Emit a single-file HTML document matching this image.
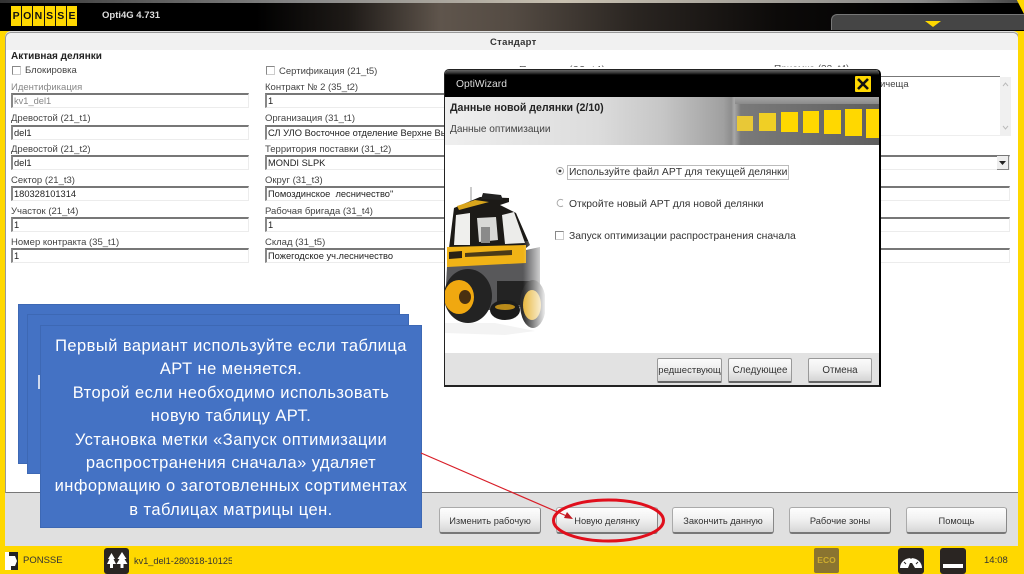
<!DOCTYPE html>
<html><head><meta charset="utf-8">
<style>
html,body{margin:0;padding:0;width:1024px;height:574px;overflow:hidden;background:#ffd800}
body{position:relative;font-family:"Liberation Sans",sans-serif;color:#333;filter:blur(.3px)}
div,span{position:absolute;box-sizing:border-box;white-space:nowrap}
.l{font-size:9.5px;line-height:12px;color:#444}
.f{height:15px;background:#fff;border:1px solid #ececec;border-top:2px solid #777;border-left:2px solid #888;font-size:9.3px;line-height:12px;padding-left:1px;color:#222;overflow:hidden}
.cb{width:9px;height:9px;border:1px solid #888;border-right-color:#ccc;border-bottom-color:#ccc;background:#fff}
.b{height:27px;border-radius:3px;border:1px solid #aaa;border-bottom:2px solid #777;border-right:1px solid #888;background:linear-gradient(#fdfdfd,#f2f2f2 45%,#d6d6d6);font-size:9.3px;line-height:26px;text-align:center;color:#333}
.d{height:25px;border-radius:2px;border:1px solid #999;border-bottom:2px solid #666;background:linear-gradient(#fbfbfb,#eee 50%,#d4d4d4);font-size:9.8px;line-height:23px;text-align:center;color:#333;overflow:hidden}
.s{background:#4472c4;border:1px solid #3d68b4}
.t{font-size:16.5px;line-height:23.4px;letter-spacing:.45px;color:#fff;text-align:center;left:0;right:0}
.dl{font-size:10.35px;color:#333;line-height:13px}
.y{background:#ffd800}
.logo{display:flex;left:11px;top:6px;width:66px;height:20px;background:#111;gap:1px}
.logo b{flex:1;background:#ffd800;color:#111;font:bold 10.5px/21px "Liberation Sans",sans-serif;text-align:center}
</style></head><body>

<!-- top bar -->
<div style="left:0;top:0;width:1024px;height:31px;background:linear-gradient(90deg,#000 0,#000 25%,#1e1a17 34%,#5f554c 43%,#544b43 50%,#2a2521 62%,#0c0a09 76%,#000 90%)"></div>
<div style="left:0;top:0;width:1024px;height:3px;background:linear-gradient(90deg,#333,#888 30%,#c8c0b0 55%,#888 90%,#444)"></div>
<div class="logo"><b>P</b><b>O</b><b>N</b><b>S</b><b>S</b><b>E</b></div>
<div style="left:102px;top:10px;font:bold 9.5px/12px 'Liberation Sans',sans-serif;color:#ddd">Opti4G 4.731</div>
<div style="left:831px;top:14px;width:193px;height:16px;background:#454545;border-radius:6px 0 0 0;border-top:1px solid #777;border-left:1px solid #777"></div>
<svg style="position:absolute;left:0;top:0" width="1024" height="31"><polygon points="925,21 941,21 933,27" fill="#ffd800"/></svg>
<div style="left:1012px;top:0;width:12px;height:14px;background:#ffd800;clip-path:polygon(40% 0,100% 0,100% 100%)"></div>

<!-- main panel -->
<div style="left:5px;top:31px;width:1014px;height:515px;background:#e0e0e0;border-radius:6px 6px 0 0"></div>
<div style="left:5px;top:32px;width:1014px;height:461px;background:#fff;border:1px solid #999;border-radius:6px 6px 0 0;border-bottom:1px solid #777"></div>
<div style="left:6px;top:33px;width:1012px;height:17px;background:#f1f1f1;border-radius:6px 6px 0 0"></div>
<div style="left:490px;top:37px;font:bold 9.5px/12px 'Liberation Sans',sans-serif;color:#333;letter-spacing:.3px">Стандарт</div>
<div style="left:1018px;top:31px;width:2px;height:515px;background:#ffd800"></div>

<div style="left:11px;top:51px;font:bold 10px/12px 'Liberation Sans',sans-serif;color:#222">Активная делянки</div>
<div class="cb" style="left:12px;top:66px"></div><div class="l" style="left:25px;top:65px">Блокировка</div>
<div class="cb" style="left:266px;top:66px"></div><div class="l" style="left:279px;top:66px">Сертификация (21_t5)</div>

<div class="l" style="left:11px;top:82px;color:#888">Идентификация</div><div class="f" style="left:11px;top:93px;width:238px;color:#888">kv1_del1</div>
<div class="l" style="left:11px;top:113px">Древостой (21_t1)</div><div class="f" style="left:11px;top:125px;width:238px">del1</div>
<div class="l" style="left:11px;top:144px">Древостой (21_t2)</div><div class="f" style="left:11px;top:155px;width:238px">del1</div>
<div class="l" style="left:11px;top:175px">Сектор (21_t3)</div><div class="f" style="left:11px;top:186px;width:238px">180328101314</div>
<div class="l" style="left:11px;top:206px">Участок (21_t4)</div><div class="f" style="left:11px;top:217px;width:238px">1</div>
<div class="l" style="left:11px;top:237px">Номер контракта (35_t1)</div><div class="f" style="left:11px;top:248px;width:238px">1</div>

<div class="l" style="left:265px;top:82px">Контракт № 2 (35_t2)</div><div class="f" style="left:265px;top:93px;width:200px">1</div>
<div class="l" style="left:265px;top:113px">Организация (31_t1)</div><div class="f" style="left:265px;top:125px;width:200px">СЛ УЛО Восточное отделение Верхне Вычегодское</div>
<div class="l" style="left:265px;top:144px">Территория поставки (31_t2)</div><div class="f" style="left:265px;top:155px;width:200px">MONDI SLPK</div>
<div class="l" style="left:265px;top:175px">Округ (31_t3)</div><div class="f" style="left:265px;top:186px;width:200px">Помоздинское&nbsp; лесничество"</div>
<div class="l" style="left:265px;top:206px">Рабочая бригада (31_t4)</div><div class="f" style="left:265px;top:217px;width:200px">1</div>
<div class="l" style="left:265px;top:237px">Склад (31_t5)</div><div class="f" style="left:265px;top:248px;width:200px">Пожегодское уч.лесничество</div>

<!-- right column -->
<div style="left:870px;top:76px;width:130px;height:60px;background:#fff;border-top:1px solid #777;border-bottom:1px solid #eee;font-size:9.5px;line-height:12px;padding-left:10px;padding-top:2px;color:#444">ичеща</div>
<div style="left:1000px;top:77px;width:11px;height:59px;background:#f0f0f0"></div>
<svg style="position:absolute;left:1000px;top:77px" width="11" height="59"><path d="M3 9 5.5 6 8 9M3 49 5.5 52 8 49" fill="none" stroke="#bbb"/></svg>
<div class="f" style="left:870px;top:155px;width:140px"></div>
<div style="left:997px;top:156px;width:12px;height:14px;background:#eee;border-right:1px solid #888;border-bottom:1px solid #888"></div>
<svg style="position:absolute;left:998px;top:160px" width="10" height="6"><polygon points="1,1 8,1 4.5,5" fill="#222"/></svg>
<div class="f" style="left:870px;top:186px;width:140px"></div>
<div class="f" style="left:870px;top:217px;width:140px"></div>
<div class="f" style="left:870px;top:248px;width:140px"></div>

<!-- clipped labels: only the tops peek out above the dialog -->
<div style="left:519px;top:60px;width:100px;height:7px;overflow:hidden"><div class="l" style="left:0;top:4px;color:#555;font-size:10.5px;letter-spacing:.5px">Приемка (33_t4)</div></div>
<div style="left:774px;top:60px;width:100px;height:7px;overflow:hidden"><div class="l" style="left:0;top:4px;color:#555;font-size:10px">Приемка (33_t4)</div></div>

<!-- dialog -->
<div style="left:444px;top:69px;width:437px;height:318px;background:#fff;border:1px solid #222;border-right:2px solid #000;border-bottom:2px solid #222;border-radius:5px 5px 0 0;overflow:hidden">
 <div style="left:0;top:0;width:435px;height:28px;background:linear-gradient(#666 0,#333 3px,#000 5px,#000)"></div>
 <div style="left:11px;top:8px;font-size:10.3px;line-height:13px;color:#ddd">OptiWizard</div>
 <div style="left:410px;top:6px;width:16px;height:16px;background:#ffd800;border-radius:1px"></div>
 <svg style="position:absolute;left:410px;top:6px" width="16" height="16"><path d="M3 3 13 13M13 3 3 13" stroke="#111" stroke-width="2.6"/></svg>
 <div style="left:0;top:27px;width:435px;height:48px;background:linear-gradient(90deg,#efefef 0,#dcdcdc 35%,#c6c6c6 50%,#a0a0a0 64%,#8e8e8e 65.800%,#a8a8a8 66.500%,#7a7a7a 68%,#6c6c6c 85%,#5e5e5e)"></div>
 <div style="left:290px;top:27px;width:145px;height:7px;background:linear-gradient(#a5a5a5,#8a8a8a)"></div>
 <div class="y" style="left:292px;top:46px;width:16px;height:15px;background:#e8c837"></div>
 <div class="y" style="left:314px;top:43px;width:17px;height:18px;background:#f0cf25"></div>
 <div class="y" style="left:336px;top:42px;width:17px;height:20px"></div>
 <div class="y" style="left:358px;top:41px;width:16px;height:22px"></div>
 <div class="y" style="left:379px;top:40px;width:17px;height:24px"></div>
 <div class="y" style="left:400px;top:39px;width:17px;height:27px"></div>
 <div class="y" style="left:421px;top:39px;width:14px;height:29px"></div>
 <div style="left:5px;top:32px;font:bold 10.6px/12px 'Liberation Sans',sans-serif;color:#222">Данные новой делянки (2/10)</div>
 <div style="left:5px;top:54px;font-size:10.1px;line-height:12px;color:#444">Данные оптимизации</div>

 <svg style="position:absolute;left:110px;top:96px" width="14" height="14"><circle cx="5" cy="5" r="3.6" fill="#fff" stroke="#aaa"/><circle cx="5" cy="5" r="1.4" fill="#333"/></svg>
 <div class="dl" style="left:122px;top:95px;width:222px;height:15px;border:1px solid #bbb;padding-left:1px">Используйте файл APT для текущей делянки</div>
 <svg style="position:absolute;left:110px;top:128px" width="14" height="14"><path d="M8 2.2A3.6 3.6 0 1 0 8 7.8" fill="none" stroke="#aaa"/></svg>
 <div class="dl" style="left:124px;top:128px">Откройте новый APT для новой делянки</div>
 <div class="cb" style="left:110px;top:161px"></div>
 <div class="dl" style="left:124px;top:160px">Запуск оптимизации распространения сначала</div>

 <!-- machine -->
 <svg style="position:absolute;left:0;top:115px" width="100" height="160">
  <defs><linearGradient id="fade" x1="0" x2="1"><stop offset="0" stop-color="#fff" stop-opacity="0"/><stop offset="1" stop-color="#fff"/></linearGradient></defs>
  <path d="M2 82 95 62 95 118 60 125 10 125 0 118Z" fill="#58585a"/>
  <path d="M26 18V2" stroke="#bbb" stroke-width="1.500"/>
  <path d="M9 23 35 12 64 13 64 17 55 20 71 28 85 60 81 63 4 63Z" fill="#1c1a17"/>
  <path d="M12 21 30 15 44 17 14 25Z" fill="#d9a51c"/>
  <path d="M38 8 56 10 58 15 36 14Z" fill="#222"/>
  <path d="M11 30 25 28 25 60 9 60Z" fill="#efefed"/>
  <path d="M32 33 51 32 53 55 34 57Z" fill="#d8d8d6"/>
  <rect x="36" y="42" width="9" height="16" fill="#8a8a8a"/>
  <path d="M57 30 69 27 80 58 60 59Z" fill="#ececea"/>
  <path d="M2 62 81 60 81 78 2 82Z" fill="#f0b316"/>
  <path d="M4 67 17 66 17 73 4 74Z" fill="#2a2114"/>
  <path d="M20 68 67 65 67 70 20 72Z" fill="#4a3a18"/>
  <rect x="52" y="96" width="34" height="24" fill="#232323"/>
  <ellipse cx="23" cy="111" rx="24" ry="27" fill="#232323"/>
  <ellipse cx="14" cy="112" rx="15" ry="17" fill="#f0a810"/>
  <ellipse cx="20" cy="112" rx="6" ry="7" fill="#4a3010"/>
  <ellipse cx="60" cy="125" rx="15" ry="10" fill="#1c1c1c"/>
  <ellipse cx="60" cy="122" rx="10" ry="3" fill="#b98a1a"/>
  <ellipse cx="88" cy="119" rx="13" ry="24" fill="#2c2c2c"/>
  <ellipse cx="87" cy="120" rx="9" ry="15" fill="#e8b840"/>
  <rect x="78" y="56" width="24" height="100" fill="url(#fade)"/>
  <path d="M0 138 50 138 90 146 60 150 0 148Z" fill="#f3f3f3"/>
 </svg>

 <div style="left:0;top:283px;width:435px;height:33px;background:#e2e2e2"></div>
 <div class="d" style="left:212px;top:288px;width:65px;font-size:9.5px">редшествующ</div>
 <div class="d" style="left:283px;top:288px;width:64px">Следующее</div>
 <div class="d" style="left:363px;top:288px;width:64px">Отмена</div>
</div>

<!-- bottom buttons -->
<div class="b" style="left:439px;top:507px;width:102px">Изменить рабочую</div>
<div class="b" style="left:556px;top:507px;width:102px">Новую делянку</div>
<div class="b" style="left:672px;top:507px;width:102px">Закончить данную</div>
<div class="b" style="left:789px;top:507px;width:102px">Рабочие зоны</div>
<div class="b" style="left:906px;top:507px;width:101px">Помощь</div>

<!-- blue stacked notes -->
<div class="s" style="left:18px;top:304px;width:382px;height:160px"></div>
<div class="s" style="left:27px;top:314px;width:382px;height:160px"></div>
<div style="left:38px;top:375px;width:2px;height:14px;background:#cfd9ee"></div>
<div class="s" style="left:40px;top:325px;width:382px;height:203px">
 <div class="t" style="top:9px">Первый вариант используйте если таблица<br>АРТ не меняется.<br>Второй если необходимо использовать<br>новую таблицу АРТ.<br>Установка метки «Запуск оптимизации<br>распространения сначала» удаляет<br>информацию о заготовленных сортиментах<br>в таблицах матрицы цен.</div>
</div>

<!-- red annotation -->
<svg style="position:absolute;left:0;top:0" width="1024" height="574">
 <line x1="421" y1="453" x2="569" y2="517" stroke="#d81e28" stroke-width="1.2"/>
 <polygon points="573,519 564,518 567,512" fill="#c01820"/>
 <ellipse cx="608.500" cy="520.500" rx="55" ry="20.500" fill="none" stroke="#e00f1c" stroke-width="3"/>
</svg>

<!-- status bar -->
<div style="left:0;top:546px;width:1024px;height:28px;background:#ffd800"></div>
<div style="left:5px;top:552px;width:13px;height:18px;background:#fff"></div>
<svg style="position:absolute;left:5px;top:552px" width="14" height="18"><path d="M4 0 13 0 13 18 6 18 6 14 10 14 12 9 10 4 4 4Z" fill="#222"/></svg>
<div style="left:23px;top:555px;font-size:9.5px;line-height:12px;color:#333">PONSSE</div>
<div style="left:104px;top:548px;width:25px;height:26px;background:#2a2522;border-radius:3px"></div>
<svg style="position:absolute;left:104px;top:548px" width="26" height="26"><path d="M7.500 5 11 11H9.500L12 16H9L9 20H6L6 16H3L5.500 11H4Z M18 4 22.500 11H20.500L23.500 16H19.500V20H16.500V16H12.500L15.500 11H13.500Z" fill="#fff"/></svg>
<div style="left:134px;top:555px;width:98px;font-size:9.2px;line-height:12px;color:#333;overflow:hidden">kv1_del1-280318-101255</div>
<div style="left:814px;top:548px;width:25px;height:25px;background:#8a7430;border-radius:2px;font:bold 8.500px/25px 'Liberation Sans',sans-serif;text-align:center;color:#cfae2e">ECO</div>
<div style="left:898px;top:548px;width:26px;height:26px;background:#2a2522;border-radius:3px"></div>
<svg style="position:absolute;left:898px;top:548px" width="26" height="26"><path d="M2 20A11 10 0 0 1 24 20L17 20 14 15 12 15 10 20Z" fill="#fff"/><path d="M6 14 8 16M13 8V11M20 14 18 16" stroke="#2a2522"/></svg>
<div style="left:940px;top:548px;width:26px;height:26px;background:#2a2522;border-radius:3px"></div>
<div style="left:943px;top:564px;width:20px;height:4px;background:#fff"></div>
<div style="left:984px;top:555px;font-size:9.500px;line-height:12px;color:#333">14:08</div>
</body></html>
